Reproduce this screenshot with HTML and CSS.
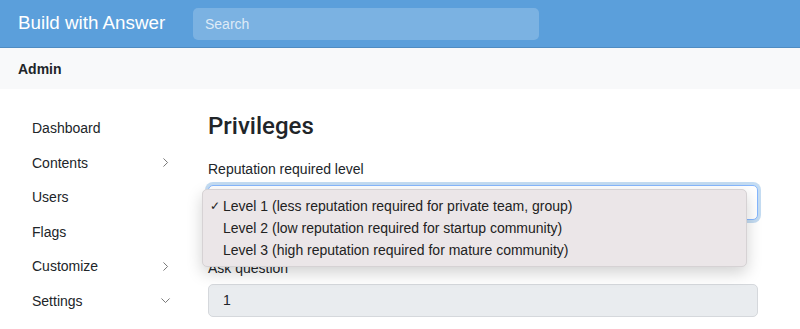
FILE: index.html
```html
<!DOCTYPE html>
<html>
<head>
    <title>Privileges - Build with Answer</title>
    <link rel="stylesheet" href="styles.css">
</head>
<body>
    <header class="topbar">
        <a class="brand" href="#">Build with Answer</a>
        <input class="search" type="text" placeholder="Search">
    </header>
    <div class="subbar">Admin</div>

    <div class="page">
        <nav class="sidenav">
            <a class="nav-item" href="#">Dashboard</a>
            <a class="nav-item" href="#">Contents
                <svg class="chev" viewBox="0 0 16 16"><path d="M5.5 3l5 5-5 5"/></svg>
            </a>
            <a class="nav-item" href="#">Users</a>
            <a class="nav-item" href="#">Flags</a>
            <a class="nav-item" href="#">Customize
                <svg class="chev" viewBox="0 0 16 16"><path d="M5.5 3l5 5-5 5"/></svg>
            </a>
            <a class="nav-item" href="#">Settings
                <svg class="chev" viewBox="0 0 16 16"><path d="M3 5.5l5 5 5-5"/></svg>
            </a>
        </nav>

        <main class="content">
            <h1 class="title">Privileges</h1>

            <div class="field">
                <label class="label">Reputation required level</label>
                <div class="select-wrap">
                    <div class="select focused"></div>
                    <ul class="popup">
                        <li class="option"><span class="check">✓</span>Level 1 (less reputation required for private team, group)</li>
                        <li class="option"><span class="check"></span>Level 2 (low reputation required for startup community)</li>
                        <li class="option"><span class="check"></span>Level 3 (high reputation required for mature community)</li>
                    </ul>
                </div>
            </div>

            <div class="field">
                <label class="label">Ask question</label>
                <input class="input" type="text" value="1" disabled>
            </div>
        </main>
    </div>
</body>
</html>
```

FILE: styles.css
```css
body {
    margin: 0;
    font-family: "Liberation Sans", Arial, sans-serif;
    font-size: 14px;
    color: #212529;
    background: #fff;
}
a {
    color: inherit;
    text-decoration: none;
}

.topbar {
    height: 47px;
    display: flex;
    align-items: center;
    padding: 0 18px;
    background: #5b9fdb;
    border-bottom: 1px solid #4f8cc2;
}
.brand {
    color: #fff;
    font-size: 18.8px;
    width: 175px;
    margin-top: -2px;
}
.search {
    width: 346px;
    height: 32px;
    box-sizing: border-box;
    padding: 0 12px;
    border: none;
    border-radius: 5px;
    background: rgba(255, 255, 255, 0.2);
    font-family: inherit;
    font-size: 14px;
    color: #fff;
}
.search::placeholder {
    color: rgba(255, 255, 255, 0.75);
}

.subbar {
    height: 41px;
    display: flex;
    align-items: center;
    padding: 0 18px;
    background: #f8f9fa;
    font-weight: 700;
}

.page {
    display: flex;
    padding-top: 22px;
}
.sidenav {
    width: 208px;
    padding: 0 36px 0 32px;
    box-sizing: border-box;
    display: flex;
    flex-direction: column;
}
.nav-item {
    height: 34.5px;
    display: flex;
    align-items: center;
    justify-content: space-between;
}
.chev {
    width: 13px;
    height: 13px;
    fill: none;
    stroke: #666;
    stroke-width: 1.1;
}

.content {
    width: 550px;
}
.title {
    margin: 0 0 20px;
    font-family: Roboto, "Liberation Sans", sans-serif;
    font-size: 24px;
    font-weight: 500;
    line-height: 1.2;
    padding-top: 1px;
}
.field {
    margin-bottom: 8px;
}
.label {
    display: block;
    margin-bottom: 8px;
}
.select-wrap {
    position: relative;
    height: 35px;
    margin-bottom: 40px;
}
.select {
    height: 35px;
    box-sizing: border-box;
    border: 1px solid #86b7fe;
    border-radius: 5px;
    background: #fff;
}
.select.focused {
    box-shadow: 0 0 0 3px #c4dcf2;
}
.popup {
    position: absolute;
    top: 4px;
    left: -6px;
    width: 543px;
    margin: 0;
    padding: 5px 0;
    list-style: none;
    background: #ebe6e8;
    border: 1px solid #d6d2d4;
    border-radius: 5px;
    box-shadow: 0 6px 16px rgba(0, 0, 0, 0.18);
    z-index: 2;
}
.option {
    height: 22px;
    display: flex;
    align-items: center;
    padding-left: 7px;
    font-size: 14px;
    color: #222;
}
.check {
    width: 13px;
    font-size: 12px;
}
.input {
    width: 100%;
    height: 33px;
    box-sizing: border-box;
    padding: 0 14px;
    border: 1px solid #d5d8dc;
    border-radius: 5px;
    background: #e9ecef;
    font-family: inherit;
    font-size: 14px;
    color: #212529;
}
```
